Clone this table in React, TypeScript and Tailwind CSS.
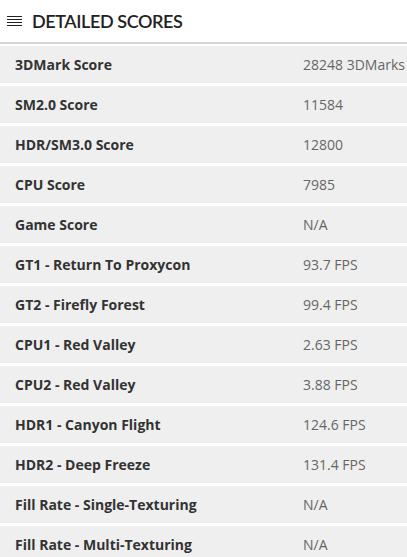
const rows: [string, string][] = [
  ["3DMark Score", "28248 3DMarks"],
  ["SM2.0 Score", "11584"],
  ["HDR/SM3.0 Score", "12800"],
  ["CPU Score", "7985"],
  ["Game Score", "N/A"],
  ["GT1 - Return To Proxycon", "93.7 FPS"],
  ["GT2 - Firefly Forest", "99.4 FPS"],
  ["CPU1 - Red Valley", "2.63 FPS"],
  ["CPU2 - Red Valley", "3.88 FPS"],
  ["HDR1 - Canyon Flight", "124.6 FPS"],
  ["HDR2 - Deep Freeze", "131.4 FPS"],
  ["Fill Rate - Single-Texturing", "N/A"],
  ["Fill Rate - Multi-Texturing", "N/A"],
];

export default function App() {
  return (
    <div className="w-[407px] h-[557px] overflow-hidden bg-white">
      <div className="flex items-center h-[44px] border-b-2 border-[#d4d4d4]">
        <div className="ml-[7px] flex flex-col gap-[2px] w-[15px]">
          <span className="block h-px bg-[#222]" />
          <span className="block h-px bg-[#222]" />
          <span className="block h-px bg-[#222]" />
          <span className="block h-px bg-[#222]" />
        </div>
        <h2 className="ml-[10px] font-['Lato',sans-serif] text-[18px] font-semibold text-[#222] tracking-[-0.4px] leading-none">
          DETAILED SCORES
        </h2>
      </div>
      <div className="flex flex-col gap-[3px] pt-[2px] font-['Open_Sans',sans-serif] text-[14px]">
        {rows.map(([label, value]) => (
          <div key={label} className="flex items-center h-[37px] bg-[#efefef]">
            <span className="pl-[15px] w-[303px] shrink-0 font-bold text-[#333]">{label}</span>
            <span className="text-[#666] whitespace-nowrap">{value}</span>
          </div>
        ))}
      </div>
    </div>
  );
}
